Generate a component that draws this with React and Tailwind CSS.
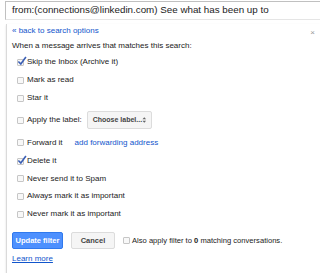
import React from "react";

const Box = ({ checked }) => (
  <span className="relative inline-block w-[7px] h-[7px] border border-[#c6c6c6] bg-[#f8f8f8] rounded-[1px] shrink-0">
    {checked && (
      <svg className="absolute left-[-1px] top-[-4px]" width="10" height="10" viewBox="0 0 11 11">
        <path d="M1.5 6 L4.2 8.8 L9.8 1.2" fill="none" stroke="#3b5fb5" strokeWidth="1.8" />
      </svg>
    )}
  </span>
);

const Row = ({ checked, children, h = "h-[18px]" }) => (
  <div className={`flex items-center ${h} pl-[5px]`}>
    <Box checked={checked} />
    <span className="ml-[3px] flex items-center">{children}</span>
  </div>
);

export default function App() {
  return (
    <div className="w-[320px] h-[273px] bg-white overflow-hidden relative whitespace-nowrap" style={{ fontFamily: '"Liberation Sans", Arial, sans-serif' }}>
      <div className="ml-[5px] mt-[1px] h-[19px] border-t border-l border-[#c0c0c0] border-b border-b-[#e5e5e5] flex items-center pl-[6px] text-[9.8px] text-[#222]">
        from:(connections@linkedin.com) See what has been up to
      </div>
      <div className="ml-[6px] h-[250px] border-l border-b border-[#dadada] shadow-[0_1px_2px_rgba(0,0,0,0.12)] pl-[5px] text-[8px] text-[#222] relative">
        <span className="absolute right-[5px] top-[3px] text-[8px] text-[#999]">×</span>
        <div className="h-[14px] mt-[4px] flex items-center text-[#15c]">« back to search options</div>
        <div className="h-[14px] mt-[1px] flex items-center">When a message arrives that matches this search:</div>
        <Row checked>Skip the Inbox (Archive it)</Row>
        <Row>Mark as read</Row>
        <Row>Star it</Row>
        <Row h="h-[26px]">
          Apply the label:
          <span className="ml-[5px] h-[18px] w-[65px] border border-[#dcdcdc] bg-[#f5f5f5] rounded-[2px] flex items-center justify-between pl-[5px] pr-[4px] font-bold text-[7px] text-[#444]">
            Choose label...
            <svg width="5" height="8" viewBox="0 0 5 8">
              <path d="M0.5 3.2 L2.5 1 L4.5 3.2 Z M0.5 4.8 L2.5 7 L4.5 4.8 Z" fill="#666" />
            </svg>
          </span>
        </Row>
        <Row h="h-[19px]">
          Forward it
          <span className="ml-[12px] text-[#15c]">add forwarding address</span>
        </Row>
        <Row checked>Delete it</Row>
        <Row h="h-[17px]">Never send it to Spam</Row>
        <Row>Always mark it as important</Row>
        <Row>Never mark it as important</Row>
        <div className="flex items-center mt-[9px] h-[17px]">
          <span className="h-[17px] w-[51px] bg-[#4d90fe] border border-[#3079ed] rounded-[2px] flex items-center justify-center text-white font-bold text-[7.5px]">Update filter</span>
          <span className="ml-[8px] h-[17px] w-[44px] bg-[#f5f5f5] border border-[#dcdcdc] rounded-[2px] flex items-center justify-center text-[#444] font-bold text-[7.5px]">Cancel</span>
          <span className="ml-[8px] flex items-center">
            <Box />
            <span className="ml-[2px] text-[7.6px]">Also apply filter to <b>0</b> matching conversations.</span>
          </span>
        </div>
        <div className="mt-[4px] h-[12px] flex items-center text-[#15c] underline">Learn more</div>
      </div>
    </div>
  );
}
